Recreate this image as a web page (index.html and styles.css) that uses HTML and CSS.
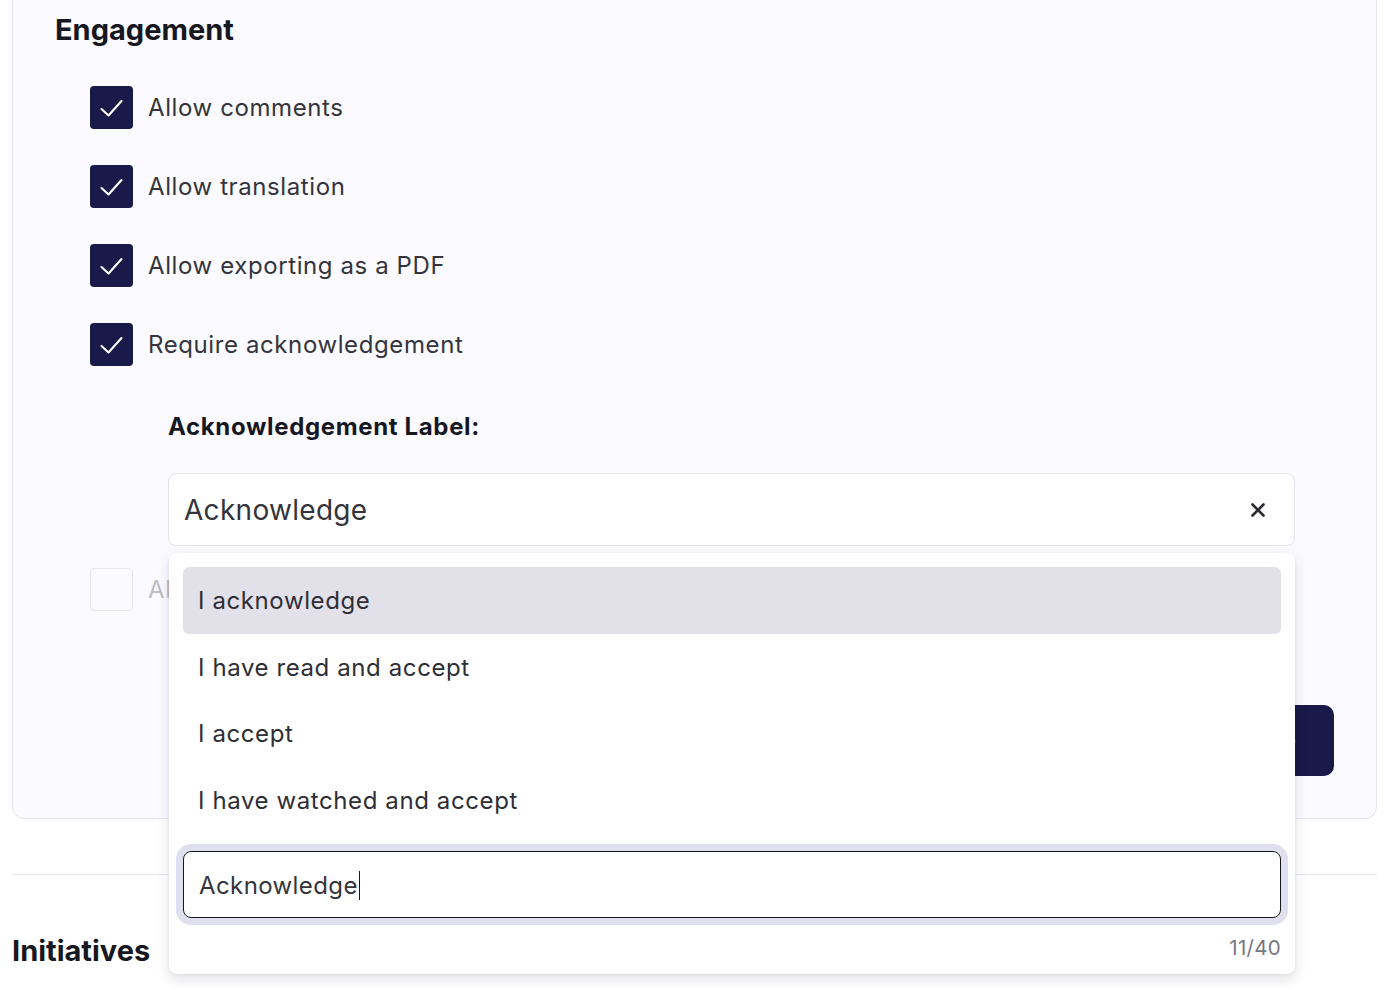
FILE: index.html
```html
<!DOCTYPE html>
<html lang="en">
<head>
<meta charset="utf-8">
<title>Engagement settings</title>
<link rel="stylesheet" href="styles.css">
</head>
<body>
<div class="page">
  <section class="card">
    <h2 class="section-title">Engagement</h2>
    <div class="check-list">
      <label class="check-row">
        <span class="box checked"><svg viewBox="0 0 43 43"><path d="M11.5 23 L18.5 29.5 L31.5 15"/></svg></span>
        <span class="check-text">Allow comments</span>
      </label>
      <label class="check-row">
        <span class="box checked"><svg viewBox="0 0 43 43"><path d="M11.5 23 L18.5 29.5 L31.5 15"/></svg></span>
        <span class="check-text">Allow translation</span>
      </label>
      <label class="check-row">
        <span class="box checked"><svg viewBox="0 0 43 43"><path d="M11.5 23 L18.5 29.5 L31.5 15"/></svg></span>
        <span class="check-text">Allow exporting as a PDF</span>
      </label>
      <label class="check-row">
        <span class="box checked"><svg viewBox="0 0 43 43"><path d="M11.5 23 L18.5 29.5 L31.5 15"/></svg></span>
        <span class="check-text">Require acknowledgement</span>
      </label>
    </div>

    <div class="ack">
      <div class="ack-label">Acknowledgement Label:</div>
      <div class="ack-field">
        <div class="select">
          <span class="select-value">Acknowledge</span>
          <svg class="clear" viewBox="0 0 14 14"><path d="M1.5 1.5 L12.5 12.5 M12.5 1.5 L1.5 12.5"/></svg>
        </div>
        <div class="dropdown">
          <ul class="options">
            <li class="option active">I acknowledge</li>
            <li class="option">I have read and accept</li>
            <li class="option">I accept</li>
            <li class="option">I have watched and accept</li>
          </ul>
          <div class="search-ring">
            <div class="search">Acknowledge<span class="caret"></span></div>
          </div>
          <div class="counter">11/40</div>
        </div>
      </div>
    </div>

    <label class="check-row faded">
      <span class="box"></span>
      <span class="check-text faded-text">Al</span>
    </label>

    <div class="actions">
      <button class="btn">Save</button>
    </div>
  </section>

  <hr class="divider">
  <h2 class="section-title initiatives">Initiatives</h2>
</div>
</body>
</html>
```
FILE: styles.css
```css
* { box-sizing: border-box; }
html { overflow: hidden; }
html, body { margin: 0; padding: 0; }
body {
  font-family: Inter, "Noto Sans", "Liberation Sans", sans-serif;
  background: #ffffff;
  color: #2e2e36;
}
.page {
  padding: 0 11px 60px 12px;
}
.card {
  margin-top: -20px;
  padding: 32px 42px 42px 42px;
  background: #fafaff;
  border: 1px solid #e5e4ee;
  border-radius: 12px;
}
.section-title {
  margin: 0;
  font-size: 29px;
  line-height: 34px;
  font-weight: 700;
  color: #17171f;
}
.check-list {
  margin: 39px 0 0 35px;
  display: flex;
  flex-direction: column;
  gap: 36px;
}
.check-row {
  display: flex;
  align-items: center;
  gap: 15px;
}
.box {
  width: 43px;
  height: 43px;
  border-radius: 4px;
  flex: none;
  display: block;
}
.box svg { width: 43px; height: 43px; display: block; }
.box svg path {
  fill: none;
  stroke: #ffffff;
  stroke-width: 2.1;
  stroke-linecap: round;
  stroke-linejoin: round;
}
.box.checked { background: #19194a; }
.check-text {
  font-size: 24px;
  line-height: 29px;
  letter-spacing: 0.6px;
  color: #34343c;
}
.ack {
  margin: 46px 39px 0 113px;
}
.ack-label {
  font-size: 24px;
  line-height: 29px;
  font-weight: 700;
  letter-spacing: 0.65px;
  color: #17171f;
}
.ack-field {
  position: relative;
  margin-top: 32px;
}
.select {
  height: 73px;
  background: #ffffff;
  border: 1px solid #e3e2ec;
  border-radius: 8px;
  display: flex;
  align-items: center;
  justify-content: space-between;
  padding: 0 29px 0 15px;
}
.select-value {
  font-size: 28px;
  letter-spacing: 0.3px;
  color: #34343c;
}
.clear { width: 14px; height: 14px; }
.clear path {
  stroke: #2a2a30;
  stroke-width: 2.6;
  stroke-linecap: round;
  fill: none;
}
.dropdown {
  position: absolute;
  top: calc(100% + 7px);
  left: 1px;
  right: 0;
  z-index: 5;
  background: #ffffff;
  border-radius: 8px;
  box-shadow: 0 5px 14px rgba(20, 20, 50, 0.12), 0 1px 3px rgba(20, 20, 50, 0.06);
  padding: 14px 14px 14px 14px;
}
.options {
  list-style: none;
  margin: 0;
  padding: 0;
}
.option {
  height: 66.7px;
  display: flex;
  align-items: center;
  padding-left: 15px;
  font-size: 24px;
  letter-spacing: 0.6px;
  color: #2e2e36;
  border-radius: 6px;
}
.option.active { background: #e2e1ea; }
.search-ring {
  margin-top: 17px;
  border-radius: 8px;
  box-shadow: 0 0 0 7px #dfdff0;
}
.search {
  height: 67px;
  border: 1px solid #17171f;
  border-radius: 8px;
  background: #ffffff;
  display: flex;
  align-items: center;
  padding-left: 15px;
  padding-top: 2px;
  font-size: 24px;
  letter-spacing: 0.4px;
  color: #34343c;
}
.caret {
  display: inline-block;
  width: 1.5px;
  height: 29px;
  background: #17171f;
  margin-left: 1px;
}
.counter {
  margin-top: 18px;
  text-align: right;
  font-size: 20.5px;
  line-height: 24px;
  letter-spacing: 0.3px;
  color: #77777f;
}
.check-row.faded {
  margin: 22px 0 0 35px;
  opacity: 0.3;
}
.check-row.faded .box {
  border: 1px solid #b8b8c4;
  background: #ffffff;
}
.actions {
  margin-top: 94px;
  display: flex;
  justify-content: flex-end;
}
.btn {
  height: 71px;
  padding: 0 38px;
  border: none;
  border-radius: 10px;
  background: #19194a;
  color: #ffffff;
  font-family: inherit;
  font-size: 24px;
  font-weight: 600;
}
.divider {
  margin: 55px 0 0 0;
  border: none;
  border-top: 1px solid #e5e4ee;
  height: 0;
}
.initiatives {
  margin-top: 59px;
}
```
